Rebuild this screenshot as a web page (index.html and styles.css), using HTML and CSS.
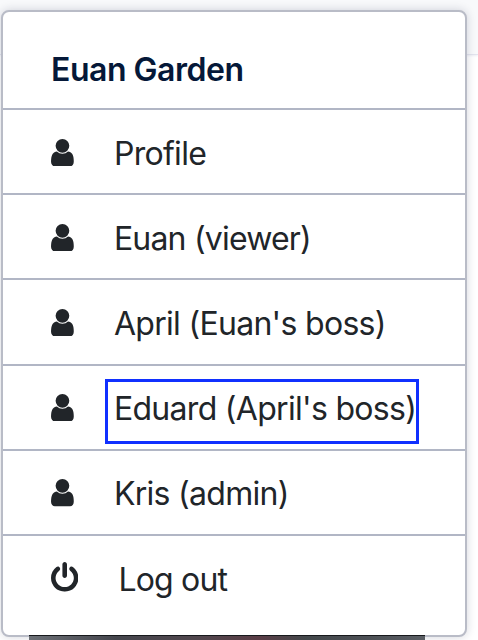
FILE: index.html
```html
<!DOCTYPE html>
<html lang="en">
<head>
<meta charset="utf-8">
<title>User menu</title>
<link rel="stylesheet" href="styles.css">
</head>
<body>
<svg class="defs" aria-hidden="true">
  <symbol id="user" viewBox="256 128 1280 1536"><path d="M1536 1399q0 109-62.5 187t-150.5 78h-854q-88 0-150.5-78t-62.5-187q0-85 8.5-160.5t31.5-152 58.5-131 94-89 134.5-34.5q131 128 313 128t313-128q76 0 134.5 34.5t94 89 58.5 131 31.5 152 8.5 160.5zm-256-887q0 159-112.5 271.5t-271.5 112.5-271.5-112.5-112.5-271.5 112.5-271.5 271.5-112.5 271.5 112.5 112.5 271.5z"/></symbol>
  <symbol id="power" viewBox="128 0 1536 1664"><path d="M1664 896q0 156-61 298t-164 245-245 164-298 61-298-61-245-164-164-245-61-298q0-182 80.5-343t226.5-270q43-32 95.5-25t83.5 50q32 42 24.5 94.5t-49.5 84.5q-98 74-151.5 181t-53.5 228q0 104 40.5 198.5t109.5 163.5 163.5 109.5 198.5 40.5 198.5-40.5 163.5-109.5 109.5-163.5 40.5-198.5q0-121-53.5-228t-151.5-181q-42-32-49.5-84.5t24.5-94.5q31-43 84-50t95 25q146 109 226.5 270t80.5 343zm-640-768v640q0 52-38 90t-90 38-90-38-38-90v-640q0-52 38-90t90-38 90 38 38 90z"/></symbol>
</svg>
<div class="topbar"></div>
<nav class="menu">
  <div class="name">Euan Garden</div>
  <a class="item"><svg class="icon"><use href="#user"/></svg><span class="label">Profile</span></a>
  <a class="item"><svg class="icon"><use href="#user"/></svg><span class="label viewer">Euan (viewer)</span></a>
  <a class="item"><svg class="icon"><use href="#user"/></svg><span class="label">April (Euan's boss)</span></a>
  <a class="item"><svg class="icon"><use href="#user"/></svg><span class="label">Eduard (April's boss)</span><span class="highlight"></span></a>
  <a class="item"><svg class="icon"><use href="#user"/></svg><span class="label">Kris (admin)</span></a>
  <a class="item"><svg class="icon power"><use href="#power"/></svg><span class="label logout">Log out</span></a>
</nav>
<div class="photo"></div>
</body>
</html>
```
FILE: styles.css
```css
* { box-sizing: border-box; }
body {
  position: relative;
  height: 640px;
  margin: 0;
  padding: 10px 0 0 1px;
  overflow: hidden;
  background: #fff;
  color: #212529;
  font-family: Inter, "Liberation Sans", sans-serif;
}
.defs { position: absolute; width: 0; height: 0; }
.topbar {
  position: absolute;
  inset: 0 0 auto;
  height: 55px;
  background: #f8f9fb;
  border-bottom: 1px solid #e3e4ee;
  box-shadow: 0 1px 2px #eeeff5;
}
.menu {
  position: relative;
  width: 466px;
  height: 627px;
  border: 2px solid #b9bcc7;
  border-radius: 8px;
  background: #fff;
  box-shadow: 0 0 10px rgba(20, 25, 60, .18);
}
.name {
  height: 96px;
  padding: 0 0 0 48px;
  color: #051838;
  font-size: 32px;
  font-weight: 600;
  line-height: 115px;
  letter-spacing: -.48px;
}
.item {
  position: relative;
  display: flex;
  align-items: center;
  height: 85.2px;
  padding: 2px 0 0 48px;
  border-top: 2px solid #b1b6c5;
}
.icon {
  flex: none;
  width: 22.9px;
  height: 27.4px;
  margin-right: 40px;
  margin-bottom: .8px;
  fill: currentColor;
}
.icon.power { width: 27.4px; height: 29.7px; margin-bottom: 3px; }
.label {
  padding-top: 2px;
  font-size: 32px;
  line-height: 40px;
  letter-spacing: -.7px;
  white-space: nowrap;
}
.viewer, .logout { letter-spacing: -.8px; }
.highlight {
  position: absolute;
  left: 102px;
  top: 13px;
  width: 314px;
  height: 65px;
  border: 3px solid #1030ff;
}
.photo {
  position: absolute;
  left: 29px;
  top: 635px;
  width: 396px;
  height: 5px;
  border-top: 1px solid #17191c;
  background: linear-gradient(90deg, #6c7076, #45464d 22%, #50474d 42%, #5a3d46 58%, #43484b 70%, #4c5055 85%, #5a5e64);
}
```
